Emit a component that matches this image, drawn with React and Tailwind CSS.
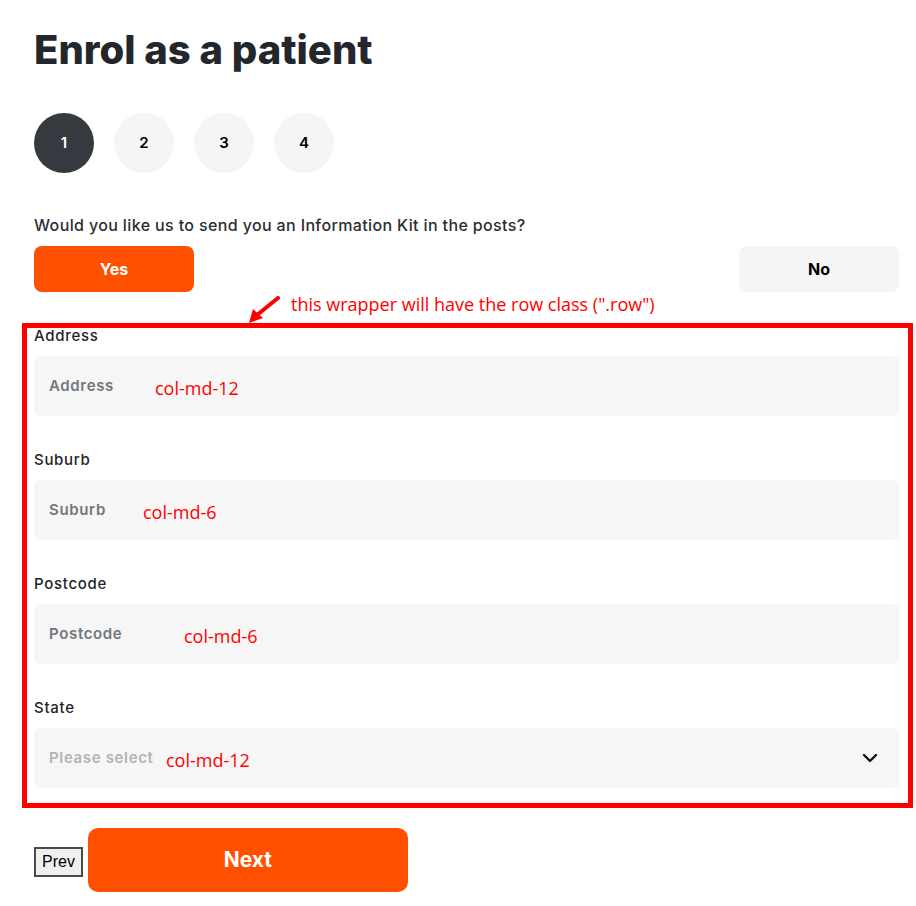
import React from "react";

const Field = ({ label, placeholder, note, noteLeft, select, light }) => (
  <div className="flex flex-col">
    <label className="text-[15px] leading-[16px] font-medium tracking-[0.7px] text-[#212529] mb-[12px]">{label}</label>
    <div className="relative h-[60px] rounded-[6px] bg-[#f6f6f6] flex items-center px-[15px]">
      <span className={`text-[15px] font-semibold tracking-[0.65px] ${light ? "text-[#b4b4b4]" : "text-[#6f7780]"}`}>{placeholder}</span>
      <span
        className="absolute top-[20px] text-[18px] leading-[24px] text-[#ff0000] font-['Open_Sans',sans-serif]"
        style={{ left: noteLeft }}
      >
        {note}
      </span>
      {select && (
        <svg className="absolute right-[21px] top-[25px]" width="16" height="10" viewBox="0 0 16 10">
          <path d="M2 2 L8 8 L14 2" fill="none" stroke="#111" strokeWidth="2.4" strokeLinecap="round" strokeLinejoin="round" />
        </svg>
      )}
    </div>
  </div>
);

export default function App() {
  return (
    <div className="bg-white min-h-[906px] font-['Inter',sans-serif] text-[#212529]">
      <div className="pl-[34px] pt-[26px] w-[899px] pb-[14px]">
        <h1 className="text-[40px] leading-[48px] font-extrabold text-[#23272b]">Enrol as a patient</h1>

        <div className="flex gap-[20px] mt-[39px]">
          <div className="w-[60px] h-[60px] rounded-full bg-[#363a40] text-white flex items-center justify-center text-[15px] font-semibold">1</div>
          <div className="w-[60px] h-[60px] rounded-full bg-[#f5f5f5] text-black flex items-center justify-center text-[15px] font-semibold">2</div>
          <div className="w-[60px] h-[60px] rounded-full bg-[#f5f5f5] text-black flex items-center justify-center text-[15px] font-semibold">3</div>
          <div className="w-[60px] h-[60px] rounded-full bg-[#f5f5f5] text-black flex items-center justify-center text-[15px] font-semibold">4</div>
        </div>

        <p className="mt-[40px] text-[16px] leading-[24px] font-medium tracking-[0.37px] text-[#2a2e33]">
          Would you like us to send you an Information Kit in the posts?
        </p>

        <div className="flex justify-between mt-[9px]">
          <button className="w-[160px] h-[46px] rounded-[8px] bg-[#ff5000] text-white text-[16px] font-bold">Yes</button>
          <button className="w-[160px] h-[46px] rounded-[8px] bg-[#f5f5f5] text-black text-[16px] font-bold">No</button>
        </div>

        <div className="relative mt-[31px] -ml-[12px] w-[891px] border-[5px] border-[#ff0000] pl-[7px] pr-[9px] pb-[15px]">
          <div className="absolute -top-[32px] left-[216px] flex items-start">
            <svg width="40" height="34" viewBox="0 0 40 34">
              <path d="M35 2 L14 19" stroke="#ff0000" strokeWidth="4" strokeLinecap="round" />
              <path d="M6 27 L10 13 L20 22 Z" fill="#ff0000" />
            </svg>
            <span className="ml-[8px] -mt-[4px] text-[18px] leading-[24px] text-[#ff0000] font-['Open_Sans',sans-serif] whitespace-nowrap">
              this wrapper will have the row class (".row")
            </span>
          </div>
          <div className="flex flex-col gap-[36px]">
            <Field label="Address" placeholder="Address" note="col-md-12" noteLeft="121px" />
            <Field label="Suburb" placeholder="Suburb" note="col-md-6" noteLeft="109px" />
            <Field label="Postcode" placeholder="Postcode" note="col-md-6" noteLeft="150px" />
            <Field label="State" placeholder="Please select" note="col-md-12" noteLeft="132px" select light />
          </div>
        </div>

        <div className="flex items-baseline gap-[5px] mt-[20px]">
          <button className="px-[6px] py-[4px] border-2 border-[#4a4a4a] bg-[#efefef] text-black text-[16px] leading-[18px] font-['Liberation_Sans',Arial,sans-serif]">
            Prev
          </button>
          <button className="w-[320px] h-[64px] rounded-[10px] bg-[#ff5000] text-white text-[21px] font-bold">Next</button>
        </div>
      </div>
    </div>
  );
}
